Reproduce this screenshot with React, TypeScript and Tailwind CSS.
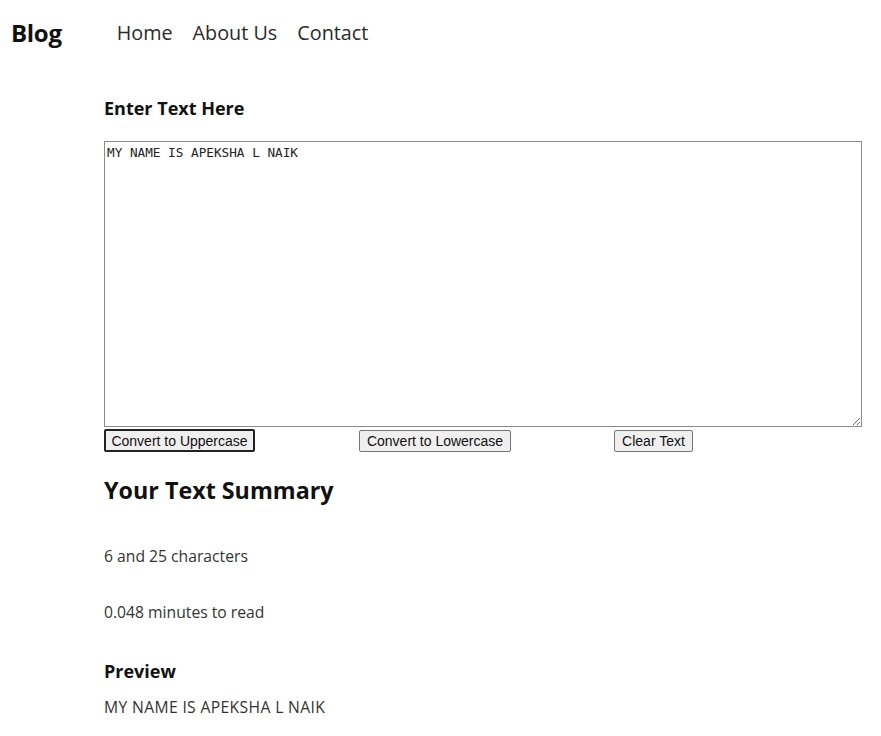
import React from 'react';

const App = () => {
  const text = 'MY NAME IS APEKSHA L NAIK';
  return (
    <div className="min-h-[736px] bg-white text-[#222]" style={{ fontFamily: '"Open Sans", "Noto Sans", sans-serif' }}>
      <nav className="flex items-center h-[66px] pl-[11px]">
        <span className="text-[24px] font-bold text-[#111] tracking-[-0.3px]">Blog</span>
        <div className="flex ml-[55px] gap-[20px] text-[19.8px] text-[#2a2a2a]">
          <a href="#">Home</a>
          <a href="#">About Us</a>
          <a href="#">Contact</a>
        </div>
      </nav>

      <div className="pl-[104px] pr-[20px]">
        <h2 className="text-[18px] font-bold text-[#111] mt-[29px] leading-[26px]">Enter Text Here</h2>
        <textarea
          defaultValue={text}
          className="block mt-[20px] w-[758px] h-[286px] border border-[#8a8a8a] px-[2px] py-[3px] text-[12.7px] text-[#222] leading-[16px] resize-y"
          style={{ fontFamily: '"DejaVu Sans Mono", "Liberation Mono", monospace' }}
        />
        <div className="flex mt-[2px] text-[14px]" style={{ fontFamily: '"Liberation Sans", Arial, sans-serif' }}>
          <button className="w-[151px] h-[23px] bg-[#efefef] border-2 border-[#222] rounded-[2px] text-[#111] leading-none">Convert to Uppercase</button>
          <button className="ml-[104px] w-[152px] h-[22px] mt-[1px] bg-[#efefef] border border-[#767676] rounded-[2px] text-[#111] leading-none">Convert to Lowercase</button>
          <button className="ml-[103px] w-[79px] h-[22px] mt-[1px] bg-[#efefef] border border-[#767676] rounded-[2px] text-[#111] leading-none">Clear Text</button>
        </div>

        <h1 className="text-[23.3px] font-bold text-[#111] mt-[21px] leading-[34px]">Your Text Summary</h1>
        <p className="text-[15.7px] text-[#333] mt-[37px] leading-[24px]">6 and 25 characters</p>
        <p className="text-[15.7px] text-[#333] mt-[32px] leading-[24px]">0.048 minutes to read</p>
        <h2 className="text-[18px] font-bold text-[#111] mt-[34px] leading-[26px]">Preview</h2>
        <p className="text-[15.7px] text-[#333] mt-[11px] leading-[24px] tracking-[0.35px]">{text}</p>
      </div>
    </div>
  );
};

export default App;
